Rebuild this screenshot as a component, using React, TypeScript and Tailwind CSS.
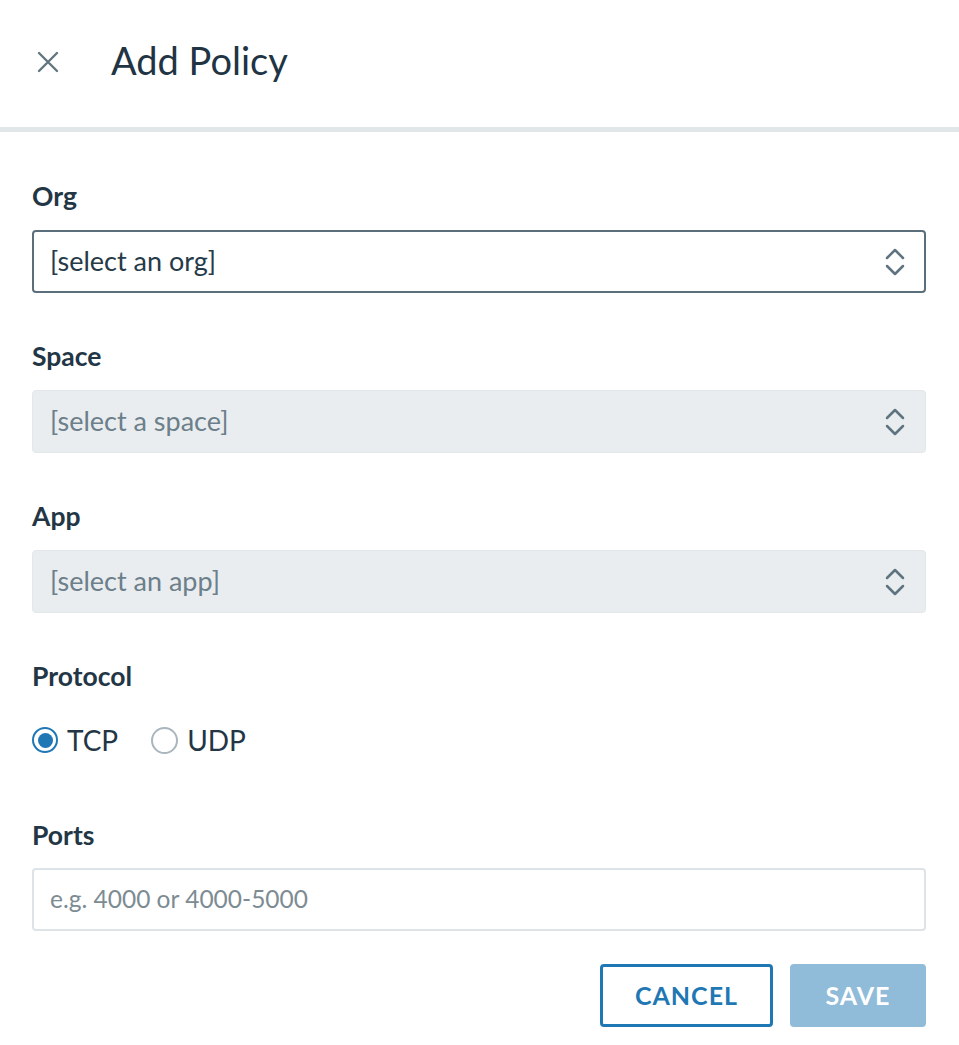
import React from 'react';

const Chevrons = () => (
  <svg width="20" height="30" viewBox="0 0 20 30" fill="none" stroke="#5f7480" strokeWidth="2.5" strokeLinecap="round" strokeLinejoin="round">
    <path d="M2 11 L10 3 L18 11" />
    <path d="M2 19 L10 27 L18 19" />
  </svg>
);

const Select = ({ text, disabled }: { text: string; disabled?: boolean }) => (
  <div
    className={
      disabled
        ? 'h-[63px] rounded-[4px] border border-[#e2e7ea] bg-[#e9edef] flex items-center justify-between pl-[17px] pr-[20px]'
        : 'h-[63px] rounded-[4px] border-2 border-[#5a6f7b] bg-white flex items-center justify-between pl-[16px] pr-[19px]'
    }
  >
    <span className={disabled ? 'text-[27px] text-[#6c7f8a]' : 'text-[27px] text-[#263a48]'}>{text}</span>
    <Chevrons />
  </div>
);

const Label = ({ children }: { children: React.ReactNode }) => (
  <div className="h-[32px] flex items-center text-[26.5px] font-bold text-[#233645]">{children}</div>
);

const App = () => {
  return (
    <div className="w-[959px] h-[1045px] bg-white font-['Lato','Liberation_Sans',sans-serif] overflow-hidden">
      <div className="h-[127px] flex items-center pl-[37px] pb-[4px]">
        <svg width="22" height="22" viewBox="0 0 22 22" stroke="#61767f" strokeWidth="2.4" strokeLinecap="round">
          <path d="M2 2 L20 20 M20 2 L2 20" />
        </svg>
        <h1 className="ml-[52px] text-[38px] text-[#213444] leading-none pb-[4px]">Add Policy</h1>
      </div>
      <div className="h-[5px] bg-[#e1e6e8]" />

      <div className="px-[32px] pr-[33px] pt-[49px]">
        <Label>Org</Label>
        <div className="mt-[17px]">
          <Select text="[select an org]" />
        </div>

        <div className="mt-[48px]">
          <Label>Space</Label>
        </div>
        <div className="mt-[17px]">
          <Select text="[select a space]" disabled />
        </div>

        <div className="mt-[48px]">
          <Label>App</Label>
        </div>
        <div className="mt-[17px]">
          <Select text="[select an app]" disabled />
        </div>

        <div className="mt-[48px]">
          <Label>Protocol</Label>
        </div>
        <div className="mt-[31px] h-[32px] flex items-center">
          <span className="w-[26px] h-[26px] rounded-full border-2 border-[#1f78b4] flex items-center justify-center">
            <span className="w-[15px] h-[15px] rounded-full bg-[#1f78b4]" />
          </span>
          <span className="ml-[9px] text-[28px] text-[#233645]">TCP</span>
          <span className="ml-[33px] w-[27px] h-[27px] rounded-full border-2 border-[#a9b6bd]" />
          <span className="ml-[9px] text-[28px] text-[#233645]">UDP</span>
        </div>

        <div className="mt-[64px]">
          <Label>Ports</Label>
        </div>
        <div className="mt-[16px] h-[63px] rounded-[4px] border-2 border-[#dde3e6] flex items-center pl-[16px]">
          <span className="text-[24.5px] text-[#7d8b93]">e.g. 4000 or 4000-5000</span>
        </div>

        <div className="mt-[33px] flex justify-end gap-[17px]">
          <button className="w-[173px] h-[63px] rounded-[4px] border-[3px] border-[#1f78b4] text-[#1f78b4] text-[25px] font-bold tracking-[1px]">
            CANCEL
          </button>
          <button className="w-[136px] h-[63px] rounded-[4px] bg-[#90bcd9] text-white text-[25px] font-bold tracking-[1px]">
            SAVE
          </button>
        </div>
      </div>
    </div>
  );
};

export default App;
